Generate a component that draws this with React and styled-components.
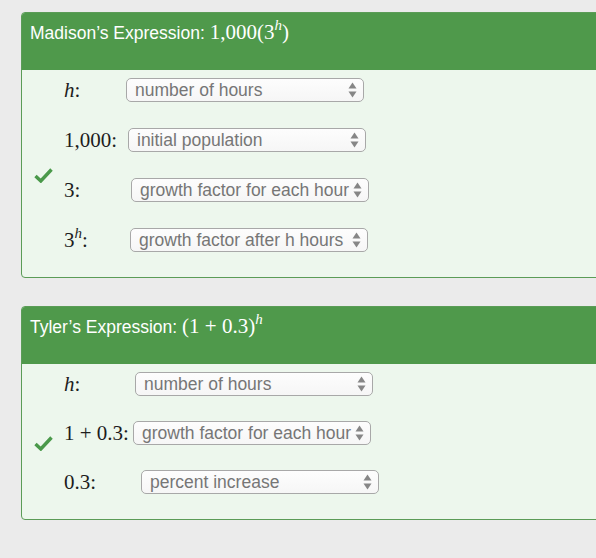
import styled, { createGlobalStyle } from 'styled-components';

const GlobalStyle = createGlobalStyle`
  html, body {
    margin: 0;
    padding: 0;
    background: #ebebeb;
    overflow: hidden;
  }
  body {
    font-family: "Liberation Sans", Arial, sans-serif;
  }
`;

const Page = styled.div`
  width: 596px;
  height: 558px;
  padding: 12px 0 0 21px;
  box-sizing: border-box;
  display: flex;
  flex-direction: column;
  gap: 28px;
  overflow: hidden;
`;

const Card = styled.section`
  width: 640px;
  border: 1px solid #5b9c57;
  border-radius: 4px;
  background: #edf7ed;
  overflow: hidden;
  flex-shrink: 0;
`;

const Header = styled.header`
  background: #4f994b;
  color: #fff;
  padding: 7px 8px 26px;
  height: 57px;
  box-sizing: border-box;
  font-size: 17.5px;
  line-height: 24px;
  white-space: nowrap;
`;

const MathText = styled.span`
  font-family: "Liberation Serif", "Times New Roman", serif;
  font-size: 21px;
  color: ${({ $dark }) => ($dark ? '#1d1d1d' : 'inherit')};
`;

const Var = styled.i`
  font-style: italic;
`;

const Sup = styled.sup`
  font-size: 15px;
  font-style: italic;
  vertical-align: 0;
  position: relative;
  top: -9px;
`;

const Body = styled.div`
  display: flex;
  flex-direction: column;
  gap: ${({ $gap }) => $gap}px;
  padding: 8px 0 25px 42px;
`;

const Row = styled.div`
  position: relative;
  display: flex;
  align-items: center;
  height: 24px;
`;

const Label = styled.div`
  width: ${({ $w }) => $w}px;
  flex-shrink: 0;
  white-space: nowrap;
`;

const Check = styled.svg`
  position: absolute;
  left: -30px;
  top: ${({ $top }) => $top}px;
  width: 19px;
  height: 15px;
`;

const Dropdown = styled.div`
  width: 238px;
  height: 24px;
  box-sizing: border-box;
  border: 1px solid #a8a8a8;
  border-radius: 5px;
  background: linear-gradient(#fdfdfd, #f6f6f6);
  display: flex;
  align-items: center;
  justify-content: space-between;
  padding: 0 6px 0 8px;
  color: #767676;
  font-size: 17.5px;
  white-space: nowrap;
  overflow: hidden;
`;

const Arrows = styled.svg`
  width: 9px;
  height: 16px;
  flex-shrink: 0;
  margin-left: 1px;
`;

function CheckMark({ top }) {
  return (
    <Check $top={top} viewBox="0 0 19 15">
      <path d="M1.5 8 L6.8 13 L17.5 1.5" fill="none" stroke="#4a994a" strokeWidth="3.4" strokeLinejoin="miter" />
    </Check>
  );
}

function Select({ text }) {
  return (
    <Dropdown>
      <span>{text}</span>
      <Arrows viewBox="0 0 9 16">
        <path d="M4.5 0.5 L8.5 6.5 L0.5 6.5 Z" fill="#868686" />
        <path d="M4.5 15.5 L8.5 9.5 L0.5 9.5 Z" fill="#868686" />
      </Arrows>
    </Dropdown>
  );
}

function Item({ label, w, text, check }) {
  return (
    <Row>
      {check !== undefined && <CheckMark top={check} />}
      <Label $w={w}>
        <MathText $dark>{label}</MathText>
      </Label>
      <Select text={text} />
    </Row>
  );
}

export default function App() {
  return (
    <>
      <GlobalStyle />
      <Page>
        <Card>
          <Header>
            Madison’s Expression:{' '}
            <MathText>
              1,000(3<Sup>h</Sup>)
            </MathText>
          </Header>
          <Body $gap={26}>
            <Item label={<><Var>h</Var>:</>} w={62} text="number of hours" />
            <Item label="1,000:" w={64} text="initial population" />
            <Item label="3:" w={67} text="growth factor for each hour" check={-10} />
            <Item label={<>3<Sup>h</Sup>:</>} w={66} text="growth factor after h hours" />
          </Body>
        </Card>
        <Card>
          <Header>
            Tyler’s Expression:{' '}
            <MathText>
              (1 + 0.3)<Sup>h</Sup>
            </MathText>
          </Header>
          <Body $gap={25}>
            <Item label={<><Var>h</Var>:</>} w={71} text="number of hours" />
            <Item label="1 + 0.3:" w={69} text="growth factor for each hour" check={15} />
            <Item label="0.3:" w={77} text="percent increase" />
          </Body>
        </Card>
      </Page>
    </>
  );
}
